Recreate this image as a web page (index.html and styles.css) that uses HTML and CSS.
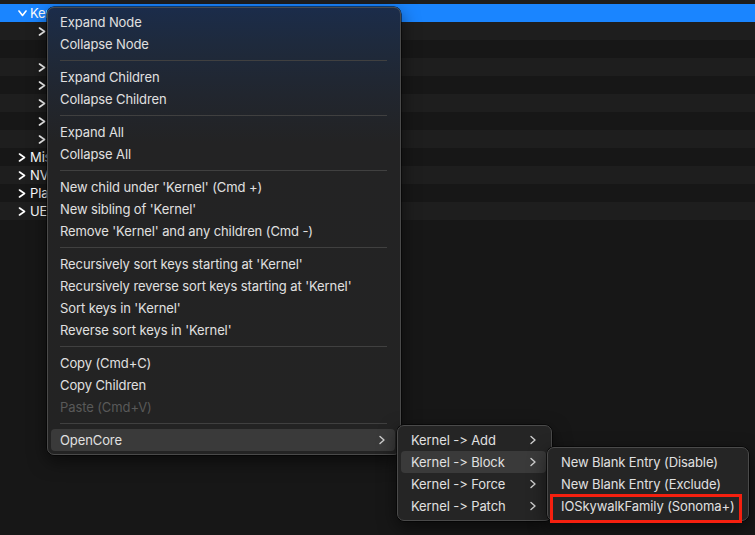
FILE: index.html
```html
<!DOCTYPE html>
<html>
<head>
<meta charset="utf-8">
<link rel="stylesheet" href="styles.css">
</head>
<body>
<div class="tree">
  <div class="strip"></div>
  <div class="row sel"><span class="chev lv0"><svg width="9" height="7" viewBox="0 0 9 7"><polyline points="1,1 4.5,5.5 8,1" /></svg></span><span class="label">Kernel</span></div>
  <div class="row odd"><span class="chev lv1"><svg width="8" height="9" viewBox="0 0 8 9"><polyline points="1.5,1 6.5,4.5 1.5,8" /></svg></span></div>
  <div class="row"><span class="chev lv1 none"></span></div>
  <div class="row odd"><span class="chev lv1"><svg width="8" height="9" viewBox="0 0 8 9"><polyline points="1.5,1 6.5,4.5 1.5,8" /></svg></span></div>
  <div class="row"><span class="chev lv1"><svg width="8" height="9" viewBox="0 0 8 9"><polyline points="1.5,1 6.5,4.5 1.5,8" /></svg></span></div>
  <div class="row odd"><span class="chev lv1"><svg width="8" height="9" viewBox="0 0 8 9"><polyline points="1.5,1 6.5,4.5 1.5,8" /></svg></span></div>
  <div class="row"><span class="chev lv1"><svg width="8" height="9" viewBox="0 0 8 9"><polyline points="1.5,1 6.5,4.5 1.5,8" /></svg></span></div>
  <div class="row odd"><span class="chev lv1"><svg width="8" height="9" viewBox="0 0 8 9"><polyline points="1.5,1 6.5,4.5 1.5,8" /></svg></span></div>
  <div class="row"><span class="chev lv0"><svg width="8" height="9" viewBox="0 0 8 9"><polyline points="1.5,1 6.5,4.5 1.5,8" /></svg></span><span class="label">Misc</span></div>
  <div class="row odd"><span class="chev lv0"><svg width="8" height="9" viewBox="0 0 8 9"><polyline points="1.5,1 6.5,4.5 1.5,8" /></svg></span><span class="label">NVRAM</span></div>
  <div class="row"><span class="chev lv0"><svg width="8" height="9" viewBox="0 0 8 9"><polyline points="1.5,1 6.5,4.5 1.5,8" /></svg></span><span class="label">PlatformInfo</span></div>
  <div class="row odd"><span class="chev lv0"><svg width="8" height="9" viewBox="0 0 8 9"><polyline points="1.5,1 6.5,4.5 1.5,8" /></svg></span><span class="label">UEFI</span></div>
</div>

<div class="menu main-menu">
  <div class="item">Expand Node</div>
  <div class="item">Collapse Node</div>
  <div class="sep"></div>
  <div class="item">Expand Children</div>
  <div class="item">Collapse Children</div>
  <div class="sep"></div>
  <div class="item">Expand All</div>
  <div class="item">Collapse All</div>
  <div class="sep"></div>
  <div class="item">New child under 'Kernel' (Cmd +)</div>
  <div class="item">New sibling of 'Kernel'</div>
  <div class="item">Remove 'Kernel' and any children (Cmd -)</div>
  <div class="sep"></div>
  <div class="item">Recursively sort keys starting at 'Kernel'</div>
  <div class="item">Recursively reverse sort keys starting at 'Kernel'</div>
  <div class="item">Sort keys in 'Kernel'</div>
  <div class="item">Reverse sort keys in 'Kernel'</div>
  <div class="sep"></div>
  <div class="item">Copy (Cmd+C)</div>
  <div class="item">Copy Children</div>
  <div class="item disabled">Paste (Cmd+V)</div>
  <div class="sep"></div>
  <div class="item sub active"><span>OpenCore</span><svg class="arrow" width="6" height="10" viewBox="0 0 6 10"><polyline points="1,1.5 5,5 1,8.5" /></svg></div>
</div>

<div class="menu sub-menu">
  <div class="item sub"><span>Kernel -&gt; Add</span><svg class="arrow" width="6" height="10" viewBox="0 0 6 10"><polyline points="1,1.5 5,5 1,8.5" /></svg></div>
  <div class="item sub active"><span>Kernel -&gt; Block</span><svg class="arrow" width="6" height="10" viewBox="0 0 6 10"><polyline points="1,1.5 5,5 1,8.5" /></svg></div>
  <div class="item sub"><span>Kernel -&gt; Force</span><svg class="arrow" width="6" height="10" viewBox="0 0 6 10"><polyline points="1,1.5 5,5 1,8.5" /></svg></div>
  <div class="item sub"><span>Kernel -&gt; Patch</span><svg class="arrow" width="6" height="10" viewBox="0 0 6 10"><polyline points="1,1.5 5,5 1,8.5" /></svg></div>
</div>

<div class="menu leaf-menu">
  <div class="item">New Blank Entry (Disable)</div>
  <div class="item">New Blank Entry (Exclude)</div>
  <div class="item">IOSkywalkFamily (Sonoma+)</div>
</div>

<div class="callout"></div>
</body>
</html>
```

FILE: styles.css
```css
html, body {
  margin: 0;
  padding: 0;
}
body {
  width: 755px;
  height: 535px;
  overflow: hidden;
  background: #171717;
  font-family: Inter, "Noto Sans", "Liberation Sans", sans-serif;
  font-size: 13px;
  color: #e0e0e0;
  position: relative;
}
.tree {
  display: flex;
  flex-direction: column;
}
.strip {
  height: 4px;
  background: #1e1e1e;
}
.row {
  height: 18px;
  display: flex;
  align-items: center;
  background: #171717;
  color: #ffffff;
}
.row.odd {
  background: #1e1e1e;
}
.row.sel {
  background: #1a85ff;
}
.chev {
  width: 12px;
  display: flex;
  align-items: center;
  justify-content: flex-start;
}
.chev.lv0 {
  margin-left: 18px;
}
.chev.lv1 {
  margin-left: 38px;
}
.chev svg polyline {
  fill: none;
  stroke: #ffffff;
  stroke-width: 1.6;
  stroke-linecap: round;
  stroke-linejoin: round;
}
.label {
  font-size: 13px;
  letter-spacing: -0.1px;
  max-width: 17px;
  overflow: hidden;
  white-space: nowrap;
}

.menu {
  position: absolute;
  box-sizing: border-box;
  display: flex;
  flex-direction: column;
  padding: 3px;
  border: 1px solid #4a4a4a;
  border-radius: 7px;
  background: #232323;
  box-shadow: 0 0 0 0.5px #000, 0 6px 18px rgba(0, 0, 0, 0.55);
}
.main-menu {
  left: 47px;
  top: 7px;
  width: 354px;
  padding-right: 5px;
  background: linear-gradient(to bottom, #1b2c4a 0px, #1e2a3d 35px, #21262f 85px, #232324 135px, #232323 100%);
}
.sub-menu {
  left: 397px;
  top: 425px;
  width: 155px;
  padding-right: 5px;
  background: #252525;
}
.leaf-menu {
  left: 547px;
  top: 447px;
  width: 202px;
  background: #252525;
}
.item {
  height: 22px;
  line-height: 22px;
  padding-left: 10px;
  padding-right: 10px;
  border-radius: 4px;
  white-space: nowrap;
  letter-spacing: -0.1px;
  color: #e0e0e0;
}
.main-menu .item {
  padding-left: 9px;
}
.item.disabled {
  color: #595959;
}
.item.sub {
  display: flex;
  align-items: center;
  justify-content: space-between;
}
.item.active {
  background: #3a3a3a;
}
.arrow polyline {
  fill: none;
  stroke: #cfcfcf;
  stroke-width: 1.4;
  stroke-linecap: round;
  stroke-linejoin: round;
}
.sep {
  height: 11px;
  display: flex;
  align-items: center;
  padding: 0 8px 0 9px;
}
.sep::after {
  content: "";
  flex: 1;
  height: 1px;
  background: #404040;
}
.callout {
  position: absolute;
  left: 550px;
  top: 494px;
  width: 192px;
  height: 29px;
  box-sizing: border-box;
  border: 3px solid #f5200f;
}
```
